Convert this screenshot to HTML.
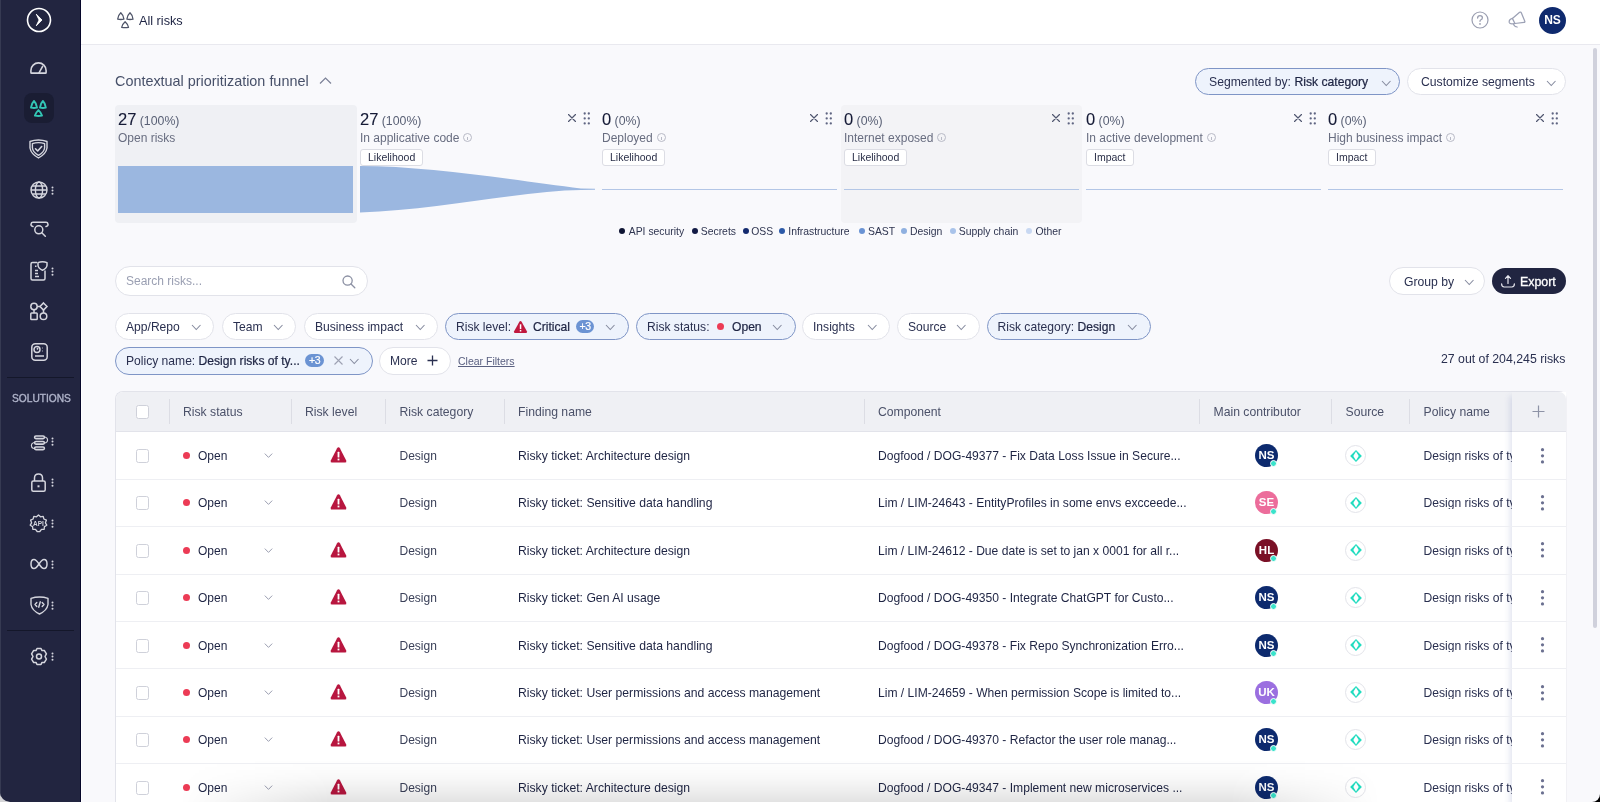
<!DOCTYPE html>
<html><head><meta charset="utf-8">
<style>
*{box-sizing:border-box;margin:0;padding:0}
html,body{width:1600px;height:802px;overflow:hidden;background:#000}
body{font-family:"Liberation Sans",sans-serif;color:#1e2443;position:relative}
.abs{position:absolute}
#app{will-change:transform;position:absolute;left:0;top:0;width:1600px;height:802px;background:#f9f9fc;border-radius:0 0 8px 10px;overflow:hidden}
#side{position:absolute;left:0;top:0;width:81px;height:802px;background:#222540;border-right:1px solid #06072a;border-bottom-left-radius:8px}
#side svg{position:absolute;overflow:visible}
.dots{position:absolute;width:2px;height:10px}
.dots i{display:block;width:2px;height:2px;border-radius:50%;background:#d5d6de;margin-bottom:1.1px}
#hdr{position:absolute;left:81px;top:0;width:1519px;height:45px;background:#fff;border-bottom:1px solid #e9e9ef}
.t{position:absolute;white-space:nowrap;line-height:1}
.pill{position:absolute;border-radius:14px;border:1px solid #e2e3ea;background:#fff;height:27px}
.pill.sel{background:#eef3fc;border-color:#7f95c6}
.chev{position:absolute}
.card{position:absolute;top:105px;width:242px;height:118px;border-radius:4px}
.num{position:absolute;font-size:16.5px;color:#151a36;line-height:1;-webkit-text-stroke:0.1px #151a36}
.num .pct{-webkit-text-stroke:0;margin-left:0px}
b.sb{font-weight:normal;color:#1e2443;-webkit-text-stroke:0.22px #1e2443}
.pct{font-size:12.3px;color:#596075}
.lbl{position:absolute;font-size:12px;color:#686d80;line-height:1;white-space:nowrap}
.tag{position:absolute;height:17px;border:1px solid #dcdde4;border-radius:3px;background:#fff;font-size:10.5px;color:#2a2f48;line-height:15px;padding:0 7px;white-space:nowrap}
.info{display:inline-block;width:9px;height:9px;border:1px solid #b8bac6;border-radius:50%;vertical-align:0px;margin-left:4px;position:relative}
.info:after{content:"";position:absolute;left:3px;top:3px;width:1px;height:3px;background:#b8bac6}
</style></head><body>
<div class="abs" style="left:0;top:780px;width:20px;height:22px;background:#d6d6d8"></div>
<div id="app">
<div class="abs" style="left:0;top:0;width:1px;height:802px;background:#363a52;z-index:5"></div>

<!-- SIDEBAR -->
<div id="side">
  <!-- toggle -->
  <svg style="left:26px;top:7px" width="26" height="26" viewBox="0 0 26 26"><circle cx="13" cy="13" r="11.5" fill="none" stroke="#fff" stroke-width="1.6"/><path d="M10.3 7.2 L16 13 L10.3 18.8 L13.1 13 Z" fill="#fff" stroke="#fff" stroke-width="0.9" stroke-linejoin="round"/></svg>
  <!-- dashboard -->
  <svg style="left:30px;top:62px" width="17" height="12" viewBox="0 0 17 12"><path d="M0.9 10.4 V8.5 A7.6 7.6 0 0 1 16.1 8.5 V10.4 Q16.1 11.1 15.4 11.1 H1.6 Q0.9 11.1 0.9 10.4 Z" fill="none" stroke="#d5d6de" stroke-width="1.6" stroke-linejoin="round"/><path d="M9 10.8 L12.6 4.3" stroke="#d5d6de" stroke-width="1.6" stroke-linecap="round"/></svg>
  <!-- active risks -->
  <div class="abs" style="left:24px;top:93px;width:30px;height:30px;border-radius:8px;background:#1a1d33"></div>
  <svg style="left:29px;top:99px" width="19" height="19" viewBox="0 0 19 19"><g fill="none" stroke="#33c6b5" stroke-width="1.9" stroke-linejoin="round"><path d="M5 2 Q7.4 4.2 8 8.6 Q5 9.3 2 8.6 Q2.6 4.2 5 2 Z"/><path d="M13.9 2 Q16.3 4.2 16.8 8.6 Q13.9 9.3 11 8.6 Q11.5 4.2 13.9 2 Z"/><path d="M9.45 11.1 Q11.9 13.3 13 16.6 Q9.45 17.4 5.9 16.6 Q7 13.3 9.45 11.1 Z"/></g></svg>
  <!-- shield check -->
  <svg style="left:29px;top:139px" width="19" height="20" viewBox="0 0 19 20"><g fill="none" stroke="#d5d6de" stroke-width="1.4" stroke-linejoin="round"><path d="M9.5 1 Q14 1 18 2.5 L18 9 Q17 15 9.5 19 Q2 15 1 9 L1 2.5 Q5 1 9.5 1 Z"/><path d="M9.5 3.6 Q12.8 3.6 15.6 4.6 L15.6 9 Q15 13.5 9.5 16.3 Q4 13.5 3.4 9 L3.4 4.6 Q6.2 3.6 9.5 3.6 Z"/><path d="M6.5 9.8 L8.7 12 L12.7 7.5" stroke-width="1.6" stroke-linecap="round"/></g></svg>
  <!-- globe -->
  <svg style="left:29.5px;top:181px" width="18" height="18" viewBox="0 0 18 18"><g fill="none" stroke="#d5d6de" stroke-width="1.4"><circle cx="9" cy="9" r="8"/><ellipse cx="9" cy="9" rx="3.6" ry="8"/><path d="M1 9 H17 M2.2 5 H15.8 M2.2 13 H15.8"/></g></svg>
  <svg style="left:51.0px;top:185.5px" width="3" height="11" viewBox="0 0 3 11"><g fill="#d5d6de"><circle cx="1.5" cy="1.5" r="1"/><circle cx="1.5" cy="4.6" r="1"/><circle cx="1.5" cy="7.7" r="1"/></g></svg>
  <!-- search binocular -->
  <svg style="left:29.5px;top:221px" width="19" height="18" viewBox="0 0 19 18"><g fill="none" stroke="#d5d6de" stroke-width="1.5" stroke-linecap="round"><path d="M3 5.5 Q0.6 5 1 3 Q1.3 1.3 3 1.3 H16 Q17.7 1.3 18 3 Q18.4 5 16 5.5"/><circle cx="8.8" cy="8.8" r="4"/><path d="M11.8 11.8 L15.3 15.3"/></g></svg>
  <!-- doc shield -->
  <svg style="left:30px;top:261px" width="18" height="20" viewBox="0 0 18 20"><g fill="none" stroke="#d5d6de" stroke-width="1.5" stroke-linejoin="round"><path d="M7 1.5 H2.5 Q1 1.5 1 3 V17.5 Q1 19 2.5 19 H13.5 Q15 19 15 17.5 V9.5"/><path d="M12.5 0.8 Q15 0.8 17 1.6 V4.5 Q16.6 7.5 12.5 9.2 Q8.4 7.5 8 4.5 V1.6 Q10 0.8 12.5 0.8 Z"/><path d="M5 5.2 H6.5 M5 9.5 H8 M5 12.5 H8 M5 15.5 H9" stroke-width="1.4"/></g></svg>
  <svg style="left:51.0px;top:266.5px" width="3" height="11" viewBox="0 0 3 11"><g fill="#d5d6de"><circle cx="1.5" cy="1.5" r="1"/><circle cx="1.5" cy="4.6" r="1"/><circle cx="1.5" cy="7.7" r="1"/></g></svg>
  <!-- workflow -->
  <svg style="left:30px;top:302px" width="18" height="19" viewBox="0 0 18 19"><g fill="none" stroke="#d5d6de" stroke-width="1.5"><circle cx="4" cy="4.5" r="3.2"/><path d="M13.5 0.9 L17 4.5 L13.5 8.1 L10 4.5 Z"/><rect x="0.8" y="11" width="6.4" height="6.6" rx="0.8"/><circle cx="13.5" cy="14.3" r="3.3"/><path d="M7.2 4.5 H10 M4 7.7 V11 M13.5 8.1 V11"/></g></svg>
  <!-- report -->
  <svg style="left:31px;top:343px" width="17" height="18" viewBox="0 0 17 18"><g fill="none" stroke="#d5d6de" stroke-width="1.5"><rect x="0.8" y="0.8" width="15.4" height="16.4" rx="3.5"/><circle cx="6" cy="6.5" r="3"/><path d="M6 6.5 L7 5 M11.5 5 H12 M11.5 8 H12 M4 13 H13"/></g></svg>
  <!-- divider -->
  <div class="abs" style="left:7px;top:377px;width:67px;height:1px;background:#14172a"></div>
  <div class="t" style="left:12px;top:393.5px;font-size:10.2px;color:#b0b4ca;-webkit-text-stroke:0.35px #b0b4ca;letter-spacing:0px">SOLUTIONS</div>
  <!-- db -->
  <svg style="left:29.5px;top:434px" width="19" height="18" viewBox="0 0 19 18"><g fill="none" stroke="#d5d6de" stroke-width="1.6"><rect x="4.6" y="2.0" width="9.8" height="2.6" rx="1.3"/><rect x="4.6" y="7.5" width="9.8" height="2.6" rx="1.3"/><rect x="4.6" y="13.0" width="9.8" height="2.6" rx="1.3"/></g><g fill="none" stroke="#d5d6de" stroke-width="1.2" stroke-linecap="round"><path d="M15.6 3.2 Q17.6 3.9 17.6 6.05 Q17.6 8.2 15.6 8.9"/><path d="M3.4 8.7 Q1.4 9.4 1.4 11.55 Q1.4 13.7 3.4 14.4"/></g></svg>
  <svg style="left:51.0px;top:436.5px" width="3" height="11" viewBox="0 0 3 11"><g fill="#d5d6de"><circle cx="1.5" cy="1.5" r="1"/><circle cx="1.5" cy="4.6" r="1"/><circle cx="1.5" cy="7.7" r="1"/></g></svg>
  <!-- lock -->
  <svg style="left:31px;top:473px" width="15" height="19" viewBox="0 0 15 19"><g fill="none" stroke="#d5d6de" stroke-width="1.5"><rect x="0.8" y="8" width="13.4" height="10.2" rx="1.5"/><path d="M3.5 8 V5 Q3.5 1 7.5 1 Q11.5 1 11.5 5 V8"/></g><rect x="6.5" y="12.3" width="2" height="2" fill="#d5d6de"/></svg>
  <svg style="left:51.0px;top:477.5px" width="3" height="11" viewBox="0 0 3 11"><g fill="#d5d6de"><circle cx="1.5" cy="1.5" r="1"/><circle cx="1.5" cy="4.6" r="1"/><circle cx="1.5" cy="7.7" r="1"/></g></svg>
  <!-- api -->
  <svg style="left:29px;top:514px" width="19" height="19" viewBox="0 0 19 19"><path d="M9.5 1 L11.5 2.8 L14.2 2.3 L14.9 5 L17.4 6.2 L16.4 8.8 L17.8 11.2 L15.4 12.6 L15.2 15.3 L12.5 15.3 L10.8 17.5 L9.5 17.7 L8.2 17.5 L6.5 15.3 L3.8 15.3 L3.6 12.6 L1.2 11.2 L2.6 8.8 L1.6 6.2 L4.1 5 L4.8 2.3 L7.5 2.8 Z" fill="none" stroke="#d5d6de" stroke-width="1.3" stroke-linejoin="round"/><text x="9.5" y="11.8" font-family="Liberation Sans" font-size="6.5" font-weight="bold" fill="#d5d6de" text-anchor="middle">API</text></svg>
  <svg style="left:51.0px;top:518.5px" width="3" height="11" viewBox="0 0 3 11"><g fill="#d5d6de"><circle cx="1.5" cy="1.5" r="1"/><circle cx="1.5" cy="4.6" r="1"/><circle cx="1.5" cy="7.7" r="1"/></g></svg>
  <!-- infinity -->
  <svg style="left:29.5px;top:558px" width="18" height="12" viewBox="0 0 18 12"><path d="M9 6 C7 3 5.5 1.5 4 1.5 C2 1.5 1 3.5 1 6 C1 8.5 2 10.5 4 10.5 C5.5 10.5 7 9 9 6 C11 3 12.5 1.5 14 1.5 C16 1.5 17 3.5 17 6 C17 8.5 16 10.5 14 10.5 C12.5 10.5 11 9 9 6 Z" fill="none" stroke="#d5d6de" stroke-width="1.5"/></svg>
  <svg style="left:51.0px;top:559.5px" width="3" height="11" viewBox="0 0 3 11"><g fill="#d5d6de"><circle cx="1.5" cy="1.5" r="1"/><circle cx="1.5" cy="4.6" r="1"/><circle cx="1.5" cy="7.7" r="1"/></g></svg>
  <!-- shield code -->
  <svg style="left:29.5px;top:596px" width="19" height="19" viewBox="0 0 19 19"><g fill="none" stroke="#d5d6de" stroke-width="1.4" stroke-linejoin="round" stroke-linecap="round"><path d="M9.5 1 Q14 1 18 2.4 L18 8.5 Q17 14.5 9.5 18 Q2 14.5 1 8.5 L1 2.4 Q5 1 9.5 1 Z"/><path d="M6.8 6.5 L5 8.5 L6.8 10.5 M12.2 6.5 L14 8.5 L12.2 10.5 M10.3 5.8 L8.7 11.2"/></g></svg>
  <svg style="left:51.0px;top:600.5px" width="3" height="11" viewBox="0 0 3 11"><g fill="#d5d6de"><circle cx="1.5" cy="1.5" r="1"/><circle cx="1.5" cy="4.6" r="1"/><circle cx="1.5" cy="7.7" r="1"/></g></svg>
  <div class="abs" style="left:7px;top:630px;width:67px;height:1px;background:#14172a"></div>
  <!-- gear -->
  <svg style="left:30px;top:647px" width="18" height="19" viewBox="0 0 18 19"><g fill="none" stroke="#d5d6de" stroke-width="1.5" stroke-linejoin="round"><path d="M7 1.5 H11 L12 3.6 L14.3 3.4 L16.4 6.9 L15 9.5 L16.4 12.1 L14.3 15.6 L12 15.4 L11 17.5 H7 L6 15.4 L3.7 15.6 L1.6 12.1 L3 9.5 L1.6 6.9 L3.7 3.4 L6 3.6 Z"/><circle cx="9" cy="9.5" r="2.5"/></g></svg>
  <svg style="left:51.0px;top:651.5px" width="3" height="11" viewBox="0 0 3 11"><g fill="#d5d6de"><circle cx="1.5" cy="1.5" r="1"/><circle cx="1.5" cy="4.6" r="1"/><circle cx="1.5" cy="7.7" r="1"/></g></svg>
</div>

<div class="abs" style="left:81px;top:0;width:1px;height:802px;background:#fff"></div>
<!-- HEADER -->
<div id="hdr"></div>
<svg class="abs" style="left:116px;top:11px" width="19" height="18" viewBox="0 0 19 18"><g fill="none" stroke="#4e5468" stroke-width="1.3" stroke-linejoin="round"><path d="M4.8 1.7 Q7.4 3.9 7.9 8.2 Q4.8 8.8 1.7 8.2 Q2.2 3.9 4.8 1.7 Z"/><path d="M14 1.7 Q16.6 3.9 17 8.2 Q14 8.8 10.9 8.2 Q11.4 3.9 14 1.7 Z"/><path d="M9.1 10.7 Q11.7 12.9 12.5 16.3 Q9.1 16.9 5.7 16.3 Q6.5 12.9 9.1 10.7 Z"/></g></svg>
<div class="t" style="left:139px;top:14.5px;font-size:12.7px;color:#1e2443">All risks</div>
<svg class="abs" style="left:1471px;top:11px" width="18" height="18" viewBox="0 0 18 18"><circle cx="9" cy="9" r="8" fill="none" stroke="#9a9eb0" stroke-width="1.2"/><path d="M6.6 7 Q6.6 4.6 9 4.6 Q11.4 4.6 11.4 6.8 Q11.4 8.3 9.6 9 Q9 9.3 9 10.3" fill="none" stroke="#9a9eb0" stroke-width="1.3" stroke-linecap="round"/><circle cx="9" cy="12.9" r="0.9" fill="#9a9eb0"/></svg>
<svg class="abs" style="left:1502px;top:6px" width="30" height="28" viewBox="0 0 30 28"><g fill="none" stroke="#9ca1b5" stroke-width="1.25" stroke-linejoin="round" stroke-linecap="round"><path d="M10.4 12.4 L17.6 6.3 Q18.7 5.6 19.3 6.7 L22.8 15.2 Q23.1 16.3 22 16.4 L12.9 17.5 Z"/><path d="M10.4 12.4 Q6.8 13.4 7.2 16.4 Q7.8 18.6 12.9 17.5"/><path d="M11.4 17.9 Q12.3 20.9 15.2 21"/></g></svg>
<div class="abs" style="left:1539px;top:7px;width:27px;height:27px;border-radius:50%;background:#0f2a6e;color:#fff;font-size:12px;font-weight:bold;text-align:center;line-height:27px">NS</div>


<!-- FUNNEL -->
<div class="t" style="left:115px;top:74px;font-size:14.4px;color:#475069">Contextual prioritization funnel</div>
<svg class="abs" style="left:319px;top:76px" width="13" height="9" viewBox="0 0 13 9"><path d="M1 7.5 L6.5 2 L12 7.5" fill="none" stroke="#7b8096" stroke-width="1.2"/></svg>
<div class="card" style="left:115px;background:#eff0f4"></div>
<div class="card" style="left:841px;width:241px;background:#f3f3f6"></div>
<div class="num" style="left:118px;top:111px">27<span class="pct"> (100%)</span></div>
<div class="lbl" style="left:118px;top:132px">Open risks</div>
<div class="num" style="left:360px;top:111px">27<span class="pct"> (100%)</span></div>
<div class="lbl" style="left:360px;top:132px">In applicative code<span class="info"></span></div>
<div class="tag" style="left:360px;top:149px">Likelihood</div>
<svg class="abs" style="left:567.5px;top:114.3px" width="8" height="8" viewBox="0 0 8 8"><path d="M0.5 0.5 L7.5 7.5 M7.5 0.5 L0.5 7.5" stroke="#50566f" stroke-width="1.15" stroke-linecap="round"/></svg>
<svg class="abs" style="left:583px;top:112px" width="8" height="13" viewBox="0 0 8 13"><g fill="#5f6582"><circle cx="1.7" cy="1.5" r="1.15"/><circle cx="5.8" cy="1.5" r="1.15"/><circle cx="1.7" cy="6.4" r="1.15"/><circle cx="5.8" cy="6.4" r="1.15"/><circle cx="1.7" cy="11.4" r="1.15"/><circle cx="5.8" cy="11.4" r="1.15"/></g></svg>
<div class="num" style="left:602px;top:111px">0<span class="pct"> (0%)</span></div>
<div class="lbl" style="left:602px;top:132px">Deployed<span class="info"></span></div>
<div class="tag" style="left:602px;top:149px">Likelihood</div>
<svg class="abs" style="left:809.5px;top:114.3px" width="8" height="8" viewBox="0 0 8 8"><path d="M0.5 0.5 L7.5 7.5 M7.5 0.5 L0.5 7.5" stroke="#50566f" stroke-width="1.15" stroke-linecap="round"/></svg>
<svg class="abs" style="left:825px;top:112px" width="8" height="13" viewBox="0 0 8 13"><g fill="#5f6582"><circle cx="1.7" cy="1.5" r="1.15"/><circle cx="5.8" cy="1.5" r="1.15"/><circle cx="1.7" cy="6.4" r="1.15"/><circle cx="5.8" cy="6.4" r="1.15"/><circle cx="1.7" cy="11.4" r="1.15"/><circle cx="5.8" cy="11.4" r="1.15"/></g></svg>
<div class="abs" style="left:602px;top:189px;width:235px;height:1px;background:#b3c6e6"></div>
<div class="num" style="left:844px;top:111px">0<span class="pct"> (0%)</span></div>
<div class="lbl" style="left:844px;top:132px">Internet exposed<span class="info"></span></div>
<div class="tag" style="left:844px;top:149px">Likelihood</div>
<svg class="abs" style="left:1051.5px;top:114.3px" width="8" height="8" viewBox="0 0 8 8"><path d="M0.5 0.5 L7.5 7.5 M7.5 0.5 L0.5 7.5" stroke="#50566f" stroke-width="1.15" stroke-linecap="round"/></svg>
<svg class="abs" style="left:1067px;top:112px" width="8" height="13" viewBox="0 0 8 13"><g fill="#5f6582"><circle cx="1.7" cy="1.5" r="1.15"/><circle cx="5.8" cy="1.5" r="1.15"/><circle cx="1.7" cy="6.4" r="1.15"/><circle cx="5.8" cy="6.4" r="1.15"/><circle cx="1.7" cy="11.4" r="1.15"/><circle cx="5.8" cy="11.4" r="1.15"/></g></svg>
<div class="abs" style="left:844px;top:189px;width:235px;height:1px;background:#b3c6e6"></div>
<div class="num" style="left:1086px;top:111px">0<span class="pct"> (0%)</span></div>
<div class="lbl" style="left:1086px;top:132px">In active development<span class="info"></span></div>
<div class="tag" style="left:1086px;top:149px">Impact</div>
<svg class="abs" style="left:1293.5px;top:114.3px" width="8" height="8" viewBox="0 0 8 8"><path d="M0.5 0.5 L7.5 7.5 M7.5 0.5 L0.5 7.5" stroke="#50566f" stroke-width="1.15" stroke-linecap="round"/></svg>
<svg class="abs" style="left:1309px;top:112px" width="8" height="13" viewBox="0 0 8 13"><g fill="#5f6582"><circle cx="1.7" cy="1.5" r="1.15"/><circle cx="5.8" cy="1.5" r="1.15"/><circle cx="1.7" cy="6.4" r="1.15"/><circle cx="5.8" cy="6.4" r="1.15"/><circle cx="1.7" cy="11.4" r="1.15"/><circle cx="5.8" cy="11.4" r="1.15"/></g></svg>
<div class="abs" style="left:1086px;top:189px;width:235px;height:1px;background:#b3c6e6"></div>
<div class="num" style="left:1328px;top:111px">0<span class="pct"> (0%)</span></div>
<div class="lbl" style="left:1328px;top:132px">High business impact<span class="info"></span></div>
<div class="tag" style="left:1328px;top:149px">Impact</div>
<svg class="abs" style="left:1535.5px;top:114.3px" width="8" height="8" viewBox="0 0 8 8"><path d="M0.5 0.5 L7.5 7.5 M7.5 0.5 L0.5 7.5" stroke="#50566f" stroke-width="1.15" stroke-linecap="round"/></svg>
<svg class="abs" style="left:1551px;top:112px" width="8" height="13" viewBox="0 0 8 13"><g fill="#5f6582"><circle cx="1.7" cy="1.5" r="1.15"/><circle cx="5.8" cy="1.5" r="1.15"/><circle cx="1.7" cy="6.4" r="1.15"/><circle cx="5.8" cy="6.4" r="1.15"/><circle cx="1.7" cy="11.4" r="1.15"/><circle cx="5.8" cy="11.4" r="1.15"/></g></svg>
<div class="abs" style="left:1328px;top:189px;width:235px;height:1px;background:#b3c6e6"></div>
<div class="abs" style="left:118px;top:166px;width:235px;height:47px;background:#9bb7e0"></div>
<svg class="abs" style="left:360px;top:160px" width="240" height="60" viewBox="360 160 240 60"><path d="M360 166 C430 166 520 181 581 188.5 L595 188.7 L595 189.7 L581 190 C525 190.5 440 210 360 212.5 Z" fill="#9bb7e0"/></svg>
<div class="abs" style="left:619.25px;top:228.3px;width:6px;height:6px;border-radius:50%;background:#0f1534"></div>
<div class="t" style="left:628.75px;top:226.5px;font-size:10.4px;color:#2f3550">API security</div>
<div class="abs" style="left:692px;top:228.3px;width:6px;height:6px;border-radius:50%;background:#121a45"></div>
<div class="t" style="left:700.75px;top:226.5px;font-size:10.4px;color:#2f3550">Secrets</div>
<div class="abs" style="left:742.5px;top:228.3px;width:6px;height:6px;border-radius:50%;background:#142a6e"></div>
<div class="t" style="left:751.25px;top:226.5px;font-size:10.4px;color:#2f3550">OSS</div>
<div class="abs" style="left:779.25px;top:228.3px;width:6px;height:6px;border-radius:50%;background:#2d5aa8"></div>
<div class="t" style="left:788.25px;top:226.5px;font-size:10.4px;color:#2f3550">Infrastructure</div>
<div class="abs" style="left:858.75px;top:228.3px;width:6px;height:6px;border-radius:50%;background:#6a93d4"></div>
<div class="t" style="left:868px;top:226.5px;font-size:10.4px;color:#2f3550">SAST</div>
<div class="abs" style="left:900.75px;top:228.3px;width:6px;height:6px;border-radius:50%;background:#8fb0e0"></div>
<div class="t" style="left:910px;top:226.5px;font-size:10.4px;color:#2f3550">Design</div>
<div class="abs" style="left:950px;top:228.3px;width:6px;height:6px;border-radius:50%;background:#a9c3ea"></div>
<div class="t" style="left:958.75px;top:226.5px;font-size:10.4px;color:#2f3550">Supply chain</div>
<div class="abs" style="left:1026.25px;top:228.3px;width:6px;height:6px;border-radius:50%;background:#c8d8f2"></div>
<div class="t" style="left:1035.5px;top:226.5px;font-size:10.4px;color:#2f3550">Other</div>
<div class="abs" style="left:1593px;top:48px;width:4px;height:580px;border-radius:2px;background:#d0d1dc"></div>
<!-- SEGMENT BUTTONS -->
<div class="pill sel" style="left:1195px;top:68px;width:205px;height:27px;border-radius:14px"></div>
<div class="t" style="left:1209px;top:76px;font-size:12.2px;color:#2a3050">Segmented by: <b class="sb">Risk category</b></div>
<svg class="abs" style="left:1380.5px;top:80px" width="10.5" height="6.5" viewBox="-1 -1 10.5 6.5"><path d="M0 0 L4.25 4.5 L8.5 0" fill="none" stroke="#858a9e" stroke-width="1.05"/></svg>
<div class="pill" style="left:1407px;top:68px;width:159px;height:27px"></div>
<div class="t" style="left:1421px;top:76px;font-size:12.2px;color:#2a3050">Customize segments</div>
<svg class="abs" style="left:1546px;top:80px" width="10.5" height="6.5" viewBox="-1 -1 10.5 6.5"><path d="M0 0 L4.25 4.5 L8.5 0" fill="none" stroke="#858a9e" stroke-width="1.05"/></svg>
<!-- SEARCH -->
<div class="pill" style="left:115px;top:266px;width:253px;height:30px;border-radius:15px"></div>
<div class="t" style="left:126px;top:275px;font-size:12px;color:#9a9fb2">Search risks...</div>
<svg class="abs" style="left:342px;top:275px" width="14" height="14" viewBox="0 0 14 14"><circle cx="5.6" cy="5.6" r="4.6" fill="none" stroke="#8b90a3" stroke-width="1.3"/><path d="M9 9 L12.8 12.8" stroke="#8b90a3" stroke-width="1.3" stroke-linecap="round"/></svg>
<div class="pill" style="left:1389px;top:267px;width:96px;height:28px"></div>
<div class="t" style="left:1404px;top:276px;font-size:12.2px;color:#2a3050">Group by</div>
<svg class="abs" style="left:1464px;top:279px" width="10.5" height="6.5" viewBox="-1 -1 10.5 6.5"><path d="M0 0 L4.25 4.5 L8.5 0" fill="none" stroke="#858a9e" stroke-width="1.05"/></svg>
<div class="abs" style="left:1491.5px;top:267.5px;width:74.5px;height:26.5px;border-radius:13.5px;background:#212541"></div>
<svg class="abs" style="left:1500px;top:273px" width="16" height="15" viewBox="0 0 16 15"><g fill="none" stroke="#e6e7ee" stroke-width="1.2" stroke-linecap="round" stroke-linejoin="round"><path d="M8 10.5 V2.8 M5.5 5.3 L8 2.6 L10.5 5.3"/><path d="M1.6 10.8 Q1.6 14 4.2 14 H11.8 Q14.4 14 14.4 10.8"/></g></svg>
<div class="t" style="left:1520px;top:276px;font-size:12.4px;color:#fff;-webkit-text-stroke:0.3px #fff">Export</div>
<!-- FILTER PILLS -->
<div class="pill" style="left:115px;top:313px;width:99px;height:27px"></div>
<div class="t" style="left:126px;top:321px;font-size:12.1px;color:#2a3050">App/Repo</div>
<svg class="abs" style="left:191px;top:324px" width="10.5" height="6.5" viewBox="-1 -1 10.5 6.5"><path d="M0 0 L4.25 4.5 L8.5 0" fill="none" stroke="#858a9e" stroke-width="1.05"/></svg>
<div class="pill" style="left:222px;top:313px;width:74px;height:27px"></div>
<div class="t" style="left:233px;top:321px;font-size:12.1px;color:#2a3050">Team</div>
<svg class="abs" style="left:273px;top:324px" width="10.5" height="6.5" viewBox="-1 -1 10.5 6.5"><path d="M0 0 L4.25 4.5 L8.5 0" fill="none" stroke="#858a9e" stroke-width="1.05"/></svg>
<div class="pill" style="left:304px;top:313px;width:134px;height:27px"></div>
<div class="t" style="left:315px;top:321px;font-size:12.1px;color:#2a3050">Business impact</div>
<svg class="abs" style="left:415px;top:324px" width="10.5" height="6.5" viewBox="-1 -1 10.5 6.5"><path d="M0 0 L4.25 4.5 L8.5 0" fill="none" stroke="#858a9e" stroke-width="1.05"/></svg>
<div class="pill sel" style="left:445px;top:313px;width:184px;height:27px"></div>
<svg class="abs" style="left:605px;top:324px" width="10.5" height="6.5" viewBox="-1 -1 10.5 6.5"><path d="M0 0 L4.25 4.5 L8.5 0" fill="none" stroke="#858a9e" stroke-width="1.05"/></svg>
<div class="pill sel" style="left:636px;top:313px;width:160px;height:27px"></div>
<svg class="abs" style="left:772px;top:324px" width="10.5" height="6.5" viewBox="-1 -1 10.5 6.5"><path d="M0 0 L4.25 4.5 L8.5 0" fill="none" stroke="#858a9e" stroke-width="1.05"/></svg>
<div class="pill" style="left:802px;top:313px;width:88px;height:27px"></div>
<div class="t" style="left:813px;top:321px;font-size:12.1px;color:#2a3050">Insights</div>
<svg class="abs" style="left:867px;top:324px" width="10.5" height="6.5" viewBox="-1 -1 10.5 6.5"><path d="M0 0 L4.25 4.5 L8.5 0" fill="none" stroke="#858a9e" stroke-width="1.05"/></svg>
<div class="pill" style="left:897px;top:313px;width:83px;height:27px"></div>
<div class="t" style="left:908px;top:321px;font-size:12.1px;color:#2a3050">Source</div>
<svg class="abs" style="left:956px;top:324px" width="10.5" height="6.5" viewBox="-1 -1 10.5 6.5"><path d="M0 0 L4.25 4.5 L8.5 0" fill="none" stroke="#858a9e" stroke-width="1.05"/></svg>
<div class="pill sel" style="left:987px;top:313px;width:164px;height:27px"></div>
<svg class="abs" style="left:1127px;top:324px" width="10.5" height="6.5" viewBox="-1 -1 10.5 6.5"><path d="M0 0 L4.25 4.5 L8.5 0" fill="none" stroke="#858a9e" stroke-width="1.05"/></svg>
<div class="t" style="left:456px;top:321px;font-size:12.1px;color:#2a3050">Risk level:</div>
<svg class="abs" style="left:513px;top:320px" width="15" height="14" viewBox="0 0 15 14"><path d="M7.5 1 Q8.2 1 8.6 1.7 L14 11.6 Q14.5 13 13 13 H2 Q0.5 13 1 11.6 L6.4 1.7 Q6.8 1 7.5 1 Z" fill="#c0183f"/><rect x="6.8" y="4.3" width="1.5" height="4.8" fill="#fff"/><rect x="6.8" y="10" width="1.5" height="1.5" fill="#fff"/></svg>
<div class="t" style="left:533px;top:321px;font-size:12.1px;color:#1e2443;-webkit-text-stroke:0.22px #1e2443">Critical</div>
<div class="abs" style="left:576px;top:320px;width:18px;height:13px;border-radius:7px;background:#6b93d3;color:#fff;font-size:10.5px;line-height:13px;text-align:center;letter-spacing:-0.5px;-webkit-text-stroke:0.2px #fff">+3</div>
<div class="t" style="left:647px;top:321px;font-size:12.1px;color:#2a3050">Risk status:</div>
<div class="abs" style="left:717px;top:323px;width:7px;height:7px;border-radius:50%;background:#ec3b55"></div>
<div class="t" style="left:732px;top:321px;font-size:12.1px;color:#1e2443;-webkit-text-stroke:0.22px #1e2443">Open</div>
<div class="t" style="left:997.5px;top:321px;font-size:12.1px;color:#2a3050">Risk category: <b class="sb">Design</b></div>
<div class="pill sel" style="left:115px;top:347px;width:258px;height:28px"></div>
<div class="t" style="left:126px;top:355px;font-size:12.1px;color:#2a3050">Policy name: <b class="sb">Design risks of ty...</b></div>
<div class="abs" style="left:305px;top:354px;width:19px;height:13px;border-radius:7px;background:#6b93d3;color:#fff;font-size:10.5px;line-height:13px;text-align:center;letter-spacing:-0.5px;-webkit-text-stroke:0.2px #fff">+3</div>
<svg class="abs" style="left:334px;top:356px" width="9" height="9" viewBox="0 0 9 9"><path d="M0.5 0.5 L8.5 8.5 M8.5 0.5 L0.5 8.5" stroke="#9ea2b3" stroke-width="1.1"/></svg>
<svg class="abs" style="left:349px;top:358px" width="10.5" height="6.5" viewBox="-1 -1 10.5 6.5"><path d="M0 0 L4.25 4.5 L8.5 0" fill="none" stroke="#858a9e" stroke-width="1.05"/></svg>
<div class="pill" style="left:379px;top:347px;width:72px;height:28px"></div>
<div class="t" style="left:390px;top:355px;font-size:12.1px;color:#2a3050">More</div>
<svg class="abs" style="left:427px;top:355px" width="11" height="11" viewBox="0 0 11 11"><path d="M5.5 0.5 V10.5 M0.5 5.5 H10.5" stroke="#2a3050" stroke-width="1.3"/></svg>
<div class="t" style="left:458px;top:356px;font-size:10.5px;color:#5a6080;text-decoration:underline">Clear Filters</div>
<div class="t" style="left:1441px;top:353px;font-size:12.3px;color:#2a3050">27 out of 204,245 risks</div>
<!-- TABLE -->
<div class="abs" style="left:115px;top:391px;width:1452px;height:420px;background:#fff;border:1px solid #e2e3ea;border-right-color:#f1f1f5;border-radius:8px 8px 0 0;overflow:hidden">
<div class="abs" style="left:0;top:0;width:1452px;height:40px;background:#eff0f4;border-bottom:1px solid #e2e3ea"></div>
</div>
<div class="abs" style="left:169px;top:399px;width:1px;height:25px;background:#dcdde4"></div>
<div class="abs" style="left:291px;top:399px;width:1px;height:25px;background:#dcdde4"></div>
<div class="abs" style="left:385px;top:399px;width:1px;height:25px;background:#dcdde4"></div>
<div class="abs" style="left:504px;top:399px;width:1px;height:25px;background:#dcdde4"></div>
<div class="abs" style="left:864px;top:399px;width:1px;height:25px;background:#dcdde4"></div>
<div class="abs" style="left:1199px;top:399px;width:1px;height:25px;background:#dcdde4"></div>
<div class="abs" style="left:1331px;top:399px;width:1px;height:25px;background:#dcdde4"></div>
<div class="abs" style="left:1409px;top:399px;width:1px;height:25px;background:#dcdde4"></div>
<div class="t" style="left:183px;top:406px;font-size:12.2px;color:#4b5169">Risk status</div>
<div class="t" style="left:305px;top:406px;font-size:12.2px;color:#4b5169">Risk level</div>
<div class="t" style="left:399.5px;top:406px;font-size:12.2px;color:#4b5169">Risk category</div>
<div class="t" style="left:518px;top:406px;font-size:12.2px;color:#4b5169">Finding name</div>
<div class="t" style="left:878px;top:406px;font-size:12.2px;color:#4b5169">Component</div>
<div class="t" style="left:1213.5px;top:406px;font-size:12.2px;color:#4b5169">Main contributor</div>
<div class="t" style="left:1345.5px;top:406px;font-size:12.2px;color:#4b5169">Source</div>
<div class="t" style="left:1423.5px;top:406px;font-size:12.2px;color:#4b5169">Policy name</div>
<div class="abs" style="left:136px;top:405px;width:13px;height:13.5px;border:1px solid #cfd1da;border-radius:2.5px;background:#fff"></div>
<div class="abs" style="left:1512px;top:392px;width:54px;height:420px;background:#fff;box-shadow:-6px 0 6px -4px rgba(70,90,160,0.16)"></div>
<div class="abs" style="left:1512px;top:392px;width:54px;height:40px;background:#eff0f4;border-bottom:1px solid #e2e3ea;border-top-right-radius:7px"></div>
<svg class="abs" style="left:1532px;top:405px" width="13" height="13" viewBox="0 0 13 13"><path d="M6.5 0.5 V12.5 M0.5 6.5 H12.5" stroke="#8e93a6" stroke-width="1.2"/></svg>
<div class="abs" style="left:136px;top:449px;width:13px;height:13.5px;border:1px solid #cfd1da;border-radius:2.5px;background:#fff"></div>
<div class="abs" style="left:183px;top:452px;width:7px;height:7px;border-radius:50%;background:#ec3b55"></div>
<div class="t" style="left:198px;top:450px;font-size:12px;color:#1e2443">Open</div>
<svg class="abs" style="left:263.5px;top:453.0px" width="9" height="6" viewBox="0 0 9 6"><path d="M0.8 0.6 L4.5 4.4 L8.2 0.6" fill="none" stroke="#9a9eb0" stroke-width="1"/></svg>
<svg class="abs" style="left:330px;top:447.0px" width="17" height="17" viewBox="0 0 17 17"><path d="M8.5 0.3 Q9.4 0.3 9.9 1.2 L16.2 13.4 Q16.9 15.6 15 15.6 H2 Q0.1 15.6 0.8 13.4 L7.1 1.2 Q7.6 0.3 8.5 0.3 Z" fill="#b8163f"/><rect x="7.6" y="4.8" width="1.8" height="5.6" rx="0.5" fill="#fff"/><rect x="7.6" y="11.6" width="1.8" height="1.8" fill="#fff"/></svg>
<div class="t" style="left:399.5px;top:450px;font-size:12px;color:#3b4159">Design</div>
<div class="t" style="left:518px;top:450px;font-size:12.2px;color:#1e2443">Risky ticket: Architecture design</div>
<div class="t" style="left:878px;top:450px;font-size:12.1px;color:#1e2443">Dogfood / DOG-49377 - Fix Data Loss Issue in Secure...</div>
<div class="abs" style="left:1255px;top:444px;width:23px;height:23px;border-radius:50%;background:#0d2a6e;color:#fff;font-size:11.5px;font-weight:bold;text-align:center;line-height:23px;letter-spacing:0px">NS</div>
<div class="abs" style="left:1270px;top:460px;width:7px;height:7px;border-radius:50%;background:#3ae3cb;border:1px solid #fff"></div>
<div class="abs" style="left:1345px;top:445px;width:21px;height:21px;border-radius:50%;background:#fff;border:1px solid #e3e4ea"></div>
<svg class="abs" style="left:1350px;top:450px" width="12" height="12" viewBox="0 0 12 12"><path d="M6 0 L11.9 6 L6 12 L0.1 6 Z M6 1.6 L3.3 6 L6 10.4 L8.7 6 Z" fill="#22dcc0" fill-rule="evenodd"/></svg>
<div class="abs" style="left:1423.5px;top:450px;width:88.5px;overflow:hidden;white-space:nowrap;font-size:12.1px;line-height:1;color:#2a3050">Design risks of type</div>
<svg class="abs" style="left:1540px;top:447.5px" width="5" height="17" viewBox="0 0 5 17"><g fill="#6b7090"><circle cx="2.5" cy="1.7" r="1.6"/><circle cx="2.5" cy="7.8" r="1.6"/><circle cx="2.5" cy="13.9" r="1.6"/></g></svg>
<div class="abs" style="left:116px;top:479px;width:1450px;height:1px;background:#eeeff3"></div>
<div class="abs" style="left:136px;top:496px;width:13px;height:13.5px;border:1px solid #cfd1da;border-radius:2.5px;background:#fff"></div>
<div class="abs" style="left:183px;top:499px;width:7px;height:7px;border-radius:50%;background:#ec3b55"></div>
<div class="t" style="left:198px;top:497px;font-size:12px;color:#1e2443">Open</div>
<svg class="abs" style="left:263.5px;top:500.4px" width="9" height="6" viewBox="0 0 9 6"><path d="M0.8 0.6 L4.5 4.4 L8.2 0.6" fill="none" stroke="#9a9eb0" stroke-width="1"/></svg>
<svg class="abs" style="left:330px;top:494.4px" width="17" height="17" viewBox="0 0 17 17"><path d="M8.5 0.3 Q9.4 0.3 9.9 1.2 L16.2 13.4 Q16.9 15.6 15 15.6 H2 Q0.1 15.6 0.8 13.4 L7.1 1.2 Q7.6 0.3 8.5 0.3 Z" fill="#b8163f"/><rect x="7.6" y="4.8" width="1.8" height="5.6" rx="0.5" fill="#fff"/><rect x="7.6" y="11.6" width="1.8" height="1.8" fill="#fff"/></svg>
<div class="t" style="left:399.5px;top:497px;font-size:12px;color:#3b4159">Design</div>
<div class="t" style="left:518px;top:497px;font-size:12.2px;color:#1e2443">Risky ticket: Sensitive data handling</div>
<div class="t" style="left:878px;top:497px;font-size:12.1px;color:#1e2443">Lim / LIM-24643 - EntityProfiles in some envs excceede...</div>
<div class="abs" style="left:1255px;top:491px;width:23px;height:23px;border-radius:50%;background:#ec6d9b;color:#fff;font-size:11.5px;font-weight:bold;text-align:center;line-height:23px;letter-spacing:0px">SE</div>
<div class="abs" style="left:1270px;top:508px;width:7px;height:7px;border-radius:50%;background:#3ae3cb;border:1px solid #fff"></div>
<div class="abs" style="left:1345px;top:492px;width:21px;height:21px;border-radius:50%;background:#fff;border:1px solid #e3e4ea"></div>
<svg class="abs" style="left:1350px;top:497px" width="12" height="12" viewBox="0 0 12 12"><path d="M6 0 L11.9 6 L6 12 L0.1 6 Z M6 1.6 L3.3 6 L6 10.4 L8.7 6 Z" fill="#22dcc0" fill-rule="evenodd"/></svg>
<div class="abs" style="left:1423.5px;top:497px;width:88.5px;overflow:hidden;white-space:nowrap;font-size:12.1px;line-height:1;color:#2a3050">Design risks of type</div>
<svg class="abs" style="left:1540px;top:494.9px" width="5" height="17" viewBox="0 0 5 17"><g fill="#6b7090"><circle cx="2.5" cy="1.7" r="1.6"/><circle cx="2.5" cy="7.8" r="1.6"/><circle cx="2.5" cy="13.9" r="1.6"/></g></svg>
<div class="abs" style="left:116px;top:526px;width:1450px;height:1px;background:#eeeff3"></div>
<div class="abs" style="left:136px;top:544px;width:13px;height:13.5px;border:1px solid #cfd1da;border-radius:2.5px;background:#fff"></div>
<div class="abs" style="left:183px;top:547px;width:7px;height:7px;border-radius:50%;background:#ec3b55"></div>
<div class="t" style="left:198px;top:545px;font-size:12px;color:#1e2443">Open</div>
<svg class="abs" style="left:263.5px;top:547.8px" width="9" height="6" viewBox="0 0 9 6"><path d="M0.8 0.6 L4.5 4.4 L8.2 0.6" fill="none" stroke="#9a9eb0" stroke-width="1"/></svg>
<svg class="abs" style="left:330px;top:541.8px" width="17" height="17" viewBox="0 0 17 17"><path d="M8.5 0.3 Q9.4 0.3 9.9 1.2 L16.2 13.4 Q16.9 15.6 15 15.6 H2 Q0.1 15.6 0.8 13.4 L7.1 1.2 Q7.6 0.3 8.5 0.3 Z" fill="#b8163f"/><rect x="7.6" y="4.8" width="1.8" height="5.6" rx="0.5" fill="#fff"/><rect x="7.6" y="11.6" width="1.8" height="1.8" fill="#fff"/></svg>
<div class="t" style="left:399.5px;top:545px;font-size:12px;color:#3b4159">Design</div>
<div class="t" style="left:518px;top:545px;font-size:12.2px;color:#1e2443">Risky ticket: Architecture design</div>
<div class="t" style="left:878px;top:545px;font-size:12.1px;color:#1e2443">Lim / LIM-24612 - Due date is set to jan x 0001 for all r...</div>
<div class="abs" style="left:1255px;top:539px;width:23px;height:23px;border-radius:50%;background:#7a1026;color:#fff;font-size:11.5px;font-weight:bold;text-align:center;line-height:23px;letter-spacing:0px">HL</div>
<div class="abs" style="left:1270px;top:555px;width:7px;height:7px;border-radius:50%;background:#3ae3cb;border:1px solid #fff"></div>
<div class="abs" style="left:1345px;top:540px;width:21px;height:21px;border-radius:50%;background:#fff;border:1px solid #e3e4ea"></div>
<svg class="abs" style="left:1350px;top:544px" width="12" height="12" viewBox="0 0 12 12"><path d="M6 0 L11.9 6 L6 12 L0.1 6 Z M6 1.6 L3.3 6 L6 10.4 L8.7 6 Z" fill="#22dcc0" fill-rule="evenodd"/></svg>
<div class="abs" style="left:1423.5px;top:545px;width:88.5px;overflow:hidden;white-space:nowrap;font-size:12.1px;line-height:1;color:#2a3050">Design risks of type</div>
<svg class="abs" style="left:1540px;top:542.3px" width="5" height="17" viewBox="0 0 5 17"><g fill="#6b7090"><circle cx="2.5" cy="1.7" r="1.6"/><circle cx="2.5" cy="7.8" r="1.6"/><circle cx="2.5" cy="13.9" r="1.6"/></g></svg>
<div class="abs" style="left:116px;top:574px;width:1450px;height:1px;background:#eeeff3"></div>
<div class="abs" style="left:136px;top:591px;width:13px;height:13.5px;border:1px solid #cfd1da;border-radius:2.5px;background:#fff"></div>
<div class="abs" style="left:183px;top:594px;width:7px;height:7px;border-radius:50%;background:#ec3b55"></div>
<div class="t" style="left:198px;top:592px;font-size:12px;color:#1e2443">Open</div>
<svg class="abs" style="left:263.5px;top:595.2px" width="9" height="6" viewBox="0 0 9 6"><path d="M0.8 0.6 L4.5 4.4 L8.2 0.6" fill="none" stroke="#9a9eb0" stroke-width="1"/></svg>
<svg class="abs" style="left:330px;top:589.2px" width="17" height="17" viewBox="0 0 17 17"><path d="M8.5 0.3 Q9.4 0.3 9.9 1.2 L16.2 13.4 Q16.9 15.6 15 15.6 H2 Q0.1 15.6 0.8 13.4 L7.1 1.2 Q7.6 0.3 8.5 0.3 Z" fill="#b8163f"/><rect x="7.6" y="4.8" width="1.8" height="5.6" rx="0.5" fill="#fff"/><rect x="7.6" y="11.6" width="1.8" height="1.8" fill="#fff"/></svg>
<div class="t" style="left:399.5px;top:592px;font-size:12px;color:#3b4159">Design</div>
<div class="t" style="left:518px;top:592px;font-size:12.2px;color:#1e2443">Risky ticket: Gen AI usage</div>
<div class="t" style="left:878px;top:592px;font-size:12.1px;color:#1e2443">Dogfood / DOG-49350 - Integrate ChatGPT for Custo...</div>
<div class="abs" style="left:1255px;top:586px;width:23px;height:23px;border-radius:50%;background:#0d2a6e;color:#fff;font-size:11.5px;font-weight:bold;text-align:center;line-height:23px;letter-spacing:0px">NS</div>
<div class="abs" style="left:1270px;top:603px;width:7px;height:7px;border-radius:50%;background:#3ae3cb;border:1px solid #fff"></div>
<div class="abs" style="left:1345px;top:587px;width:21px;height:21px;border-radius:50%;background:#fff;border:1px solid #e3e4ea"></div>
<svg class="abs" style="left:1350px;top:592px" width="12" height="12" viewBox="0 0 12 12"><path d="M6 0 L11.9 6 L6 12 L0.1 6 Z M6 1.6 L3.3 6 L6 10.4 L8.7 6 Z" fill="#22dcc0" fill-rule="evenodd"/></svg>
<div class="abs" style="left:1423.5px;top:592px;width:88.5px;overflow:hidden;white-space:nowrap;font-size:12.1px;line-height:1;color:#2a3050">Design risks of type</div>
<svg class="abs" style="left:1540px;top:589.7px" width="5" height="17" viewBox="0 0 5 17"><g fill="#6b7090"><circle cx="2.5" cy="1.7" r="1.6"/><circle cx="2.5" cy="7.8" r="1.6"/><circle cx="2.5" cy="13.9" r="1.6"/></g></svg>
<div class="abs" style="left:116px;top:621px;width:1450px;height:1px;background:#eeeff3"></div>
<div class="abs" style="left:136px;top:639px;width:13px;height:13.5px;border:1px solid #cfd1da;border-radius:2.5px;background:#fff"></div>
<div class="abs" style="left:183px;top:642px;width:7px;height:7px;border-radius:50%;background:#ec3b55"></div>
<div class="t" style="left:198px;top:640px;font-size:12px;color:#1e2443">Open</div>
<svg class="abs" style="left:263.5px;top:642.6px" width="9" height="6" viewBox="0 0 9 6"><path d="M0.8 0.6 L4.5 4.4 L8.2 0.6" fill="none" stroke="#9a9eb0" stroke-width="1"/></svg>
<svg class="abs" style="left:330px;top:636.6px" width="17" height="17" viewBox="0 0 17 17"><path d="M8.5 0.3 Q9.4 0.3 9.9 1.2 L16.2 13.4 Q16.9 15.6 15 15.6 H2 Q0.1 15.6 0.8 13.4 L7.1 1.2 Q7.6 0.3 8.5 0.3 Z" fill="#b8163f"/><rect x="7.6" y="4.8" width="1.8" height="5.6" rx="0.5" fill="#fff"/><rect x="7.6" y="11.6" width="1.8" height="1.8" fill="#fff"/></svg>
<div class="t" style="left:399.5px;top:640px;font-size:12px;color:#3b4159">Design</div>
<div class="t" style="left:518px;top:640px;font-size:12.2px;color:#1e2443">Risky ticket: Sensitive data handling</div>
<div class="t" style="left:878px;top:640px;font-size:12.1px;color:#1e2443">Dogfood / DOG-49378 - Fix Repo Synchronization Erro...</div>
<div class="abs" style="left:1255px;top:634px;width:23px;height:23px;border-radius:50%;background:#0d2a6e;color:#fff;font-size:11.5px;font-weight:bold;text-align:center;line-height:23px;letter-spacing:0px">NS</div>
<div class="abs" style="left:1270px;top:650px;width:7px;height:7px;border-radius:50%;background:#3ae3cb;border:1px solid #fff"></div>
<div class="abs" style="left:1345px;top:635px;width:21px;height:21px;border-radius:50%;background:#fff;border:1px solid #e3e4ea"></div>
<svg class="abs" style="left:1350px;top:639px" width="12" height="12" viewBox="0 0 12 12"><path d="M6 0 L11.9 6 L6 12 L0.1 6 Z M6 1.6 L3.3 6 L6 10.4 L8.7 6 Z" fill="#22dcc0" fill-rule="evenodd"/></svg>
<div class="abs" style="left:1423.5px;top:640px;width:88.5px;overflow:hidden;white-space:nowrap;font-size:12.1px;line-height:1;color:#2a3050">Design risks of type</div>
<svg class="abs" style="left:1540px;top:637.1px" width="5" height="17" viewBox="0 0 5 17"><g fill="#6b7090"><circle cx="2.5" cy="1.7" r="1.6"/><circle cx="2.5" cy="7.8" r="1.6"/><circle cx="2.5" cy="13.9" r="1.6"/></g></svg>
<div class="abs" style="left:116px;top:668px;width:1450px;height:1px;background:#eeeff3"></div>
<div class="abs" style="left:136px;top:686px;width:13px;height:13.5px;border:1px solid #cfd1da;border-radius:2.5px;background:#fff"></div>
<div class="abs" style="left:183px;top:689px;width:7px;height:7px;border-radius:50%;background:#ec3b55"></div>
<div class="t" style="left:198px;top:687px;font-size:12px;color:#1e2443">Open</div>
<svg class="abs" style="left:263.5px;top:690.0px" width="9" height="6" viewBox="0 0 9 6"><path d="M0.8 0.6 L4.5 4.4 L8.2 0.6" fill="none" stroke="#9a9eb0" stroke-width="1"/></svg>
<svg class="abs" style="left:330px;top:684.0px" width="17" height="17" viewBox="0 0 17 17"><path d="M8.5 0.3 Q9.4 0.3 9.9 1.2 L16.2 13.4 Q16.9 15.6 15 15.6 H2 Q0.1 15.6 0.8 13.4 L7.1 1.2 Q7.6 0.3 8.5 0.3 Z" fill="#b8163f"/><rect x="7.6" y="4.8" width="1.8" height="5.6" rx="0.5" fill="#fff"/><rect x="7.6" y="11.6" width="1.8" height="1.8" fill="#fff"/></svg>
<div class="t" style="left:399.5px;top:687px;font-size:12px;color:#3b4159">Design</div>
<div class="t" style="left:518px;top:687px;font-size:12.2px;color:#1e2443">Risky ticket: User permissions and access management</div>
<div class="t" style="left:878px;top:687px;font-size:12.1px;color:#1e2443">Lim / LIM-24659 - When permission Scope is limited to...</div>
<div class="abs" style="left:1255px;top:681px;width:23px;height:23px;border-radius:50%;background:#9b6fe0;color:#fff;font-size:11.5px;font-weight:bold;text-align:center;line-height:23px;letter-spacing:0px">UK</div>
<div class="abs" style="left:1270px;top:698px;width:7px;height:7px;border-radius:50%;background:#3ae3cb;border:1px solid #fff"></div>
<div class="abs" style="left:1345px;top:682px;width:21px;height:21px;border-radius:50%;background:#fff;border:1px solid #e3e4ea"></div>
<svg class="abs" style="left:1350px;top:686px" width="12" height="12" viewBox="0 0 12 12"><path d="M6 0 L11.9 6 L6 12 L0.1 6 Z M6 1.6 L3.3 6 L6 10.4 L8.7 6 Z" fill="#22dcc0" fill-rule="evenodd"/></svg>
<div class="abs" style="left:1423.5px;top:687px;width:88.5px;overflow:hidden;white-space:nowrap;font-size:12.1px;line-height:1;color:#2a3050">Design risks of type</div>
<svg class="abs" style="left:1540px;top:684.5px" width="5" height="17" viewBox="0 0 5 17"><g fill="#6b7090"><circle cx="2.5" cy="1.7" r="1.6"/><circle cx="2.5" cy="7.8" r="1.6"/><circle cx="2.5" cy="13.9" r="1.6"/></g></svg>
<div class="abs" style="left:116px;top:716px;width:1450px;height:1px;background:#eeeff3"></div>
<div class="abs" style="left:136px;top:733px;width:13px;height:13.5px;border:1px solid #cfd1da;border-radius:2.5px;background:#fff"></div>
<div class="abs" style="left:183px;top:736px;width:7px;height:7px;border-radius:50%;background:#ec3b55"></div>
<div class="t" style="left:198px;top:734px;font-size:12px;color:#1e2443">Open</div>
<svg class="abs" style="left:263.5px;top:737.4px" width="9" height="6" viewBox="0 0 9 6"><path d="M0.8 0.6 L4.5 4.4 L8.2 0.6" fill="none" stroke="#9a9eb0" stroke-width="1"/></svg>
<svg class="abs" style="left:330px;top:731.4px" width="17" height="17" viewBox="0 0 17 17"><path d="M8.5 0.3 Q9.4 0.3 9.9 1.2 L16.2 13.4 Q16.9 15.6 15 15.6 H2 Q0.1 15.6 0.8 13.4 L7.1 1.2 Q7.6 0.3 8.5 0.3 Z" fill="#b8163f"/><rect x="7.6" y="4.8" width="1.8" height="5.6" rx="0.5" fill="#fff"/><rect x="7.6" y="11.6" width="1.8" height="1.8" fill="#fff"/></svg>
<div class="t" style="left:399.5px;top:734px;font-size:12px;color:#3b4159">Design</div>
<div class="t" style="left:518px;top:734px;font-size:12.2px;color:#1e2443">Risky ticket: User permissions and access management</div>
<div class="t" style="left:878px;top:734px;font-size:12.1px;color:#1e2443">Dogfood / DOG-49370 - Refactor the user role manag...</div>
<div class="abs" style="left:1255px;top:728px;width:23px;height:23px;border-radius:50%;background:#0d2a6e;color:#fff;font-size:11.5px;font-weight:bold;text-align:center;line-height:23px;letter-spacing:0px">NS</div>
<div class="abs" style="left:1270px;top:745px;width:7px;height:7px;border-radius:50%;background:#3ae3cb;border:1px solid #fff"></div>
<div class="abs" style="left:1345px;top:729px;width:21px;height:21px;border-radius:50%;background:#fff;border:1px solid #e3e4ea"></div>
<svg class="abs" style="left:1350px;top:734px" width="12" height="12" viewBox="0 0 12 12"><path d="M6 0 L11.9 6 L6 12 L0.1 6 Z M6 1.6 L3.3 6 L6 10.4 L8.7 6 Z" fill="#22dcc0" fill-rule="evenodd"/></svg>
<div class="abs" style="left:1423.5px;top:734px;width:88.5px;overflow:hidden;white-space:nowrap;font-size:12.1px;line-height:1;color:#2a3050">Design risks of type</div>
<svg class="abs" style="left:1540px;top:731.9px" width="5" height="17" viewBox="0 0 5 17"><g fill="#6b7090"><circle cx="2.5" cy="1.7" r="1.6"/><circle cx="2.5" cy="7.8" r="1.6"/><circle cx="2.5" cy="13.9" r="1.6"/></g></svg>
<div class="abs" style="left:116px;top:763px;width:1450px;height:1px;background:#eeeff3"></div>
<div class="abs" style="left:136px;top:781px;width:13px;height:13.5px;border:1px solid #cfd1da;border-radius:2.5px;background:#fff"></div>
<div class="abs" style="left:183px;top:784px;width:7px;height:7px;border-radius:50%;background:#ec3b55"></div>
<div class="t" style="left:198px;top:782px;font-size:12px;color:#1e2443">Open</div>
<svg class="abs" style="left:263.5px;top:784.8px" width="9" height="6" viewBox="0 0 9 6"><path d="M0.8 0.6 L4.5 4.4 L8.2 0.6" fill="none" stroke="#9a9eb0" stroke-width="1"/></svg>
<svg class="abs" style="left:330px;top:778.8px" width="17" height="17" viewBox="0 0 17 17"><path d="M8.5 0.3 Q9.4 0.3 9.9 1.2 L16.2 13.4 Q16.9 15.6 15 15.6 H2 Q0.1 15.6 0.8 13.4 L7.1 1.2 Q7.6 0.3 8.5 0.3 Z" fill="#b8163f"/><rect x="7.6" y="4.8" width="1.8" height="5.6" rx="0.5" fill="#fff"/><rect x="7.6" y="11.6" width="1.8" height="1.8" fill="#fff"/></svg>
<div class="t" style="left:399.5px;top:782px;font-size:12px;color:#3b4159">Design</div>
<div class="t" style="left:518px;top:782px;font-size:12.2px;color:#1e2443">Risky ticket: Architecture design</div>
<div class="t" style="left:878px;top:782px;font-size:12.1px;color:#1e2443">Dogfood / DOG-49347 - Implement new microservices ...</div>
<div class="abs" style="left:1255px;top:776px;width:23px;height:23px;border-radius:50%;background:#0d2a6e;color:#fff;font-size:11.5px;font-weight:bold;text-align:center;line-height:23px;letter-spacing:0px">NS</div>
<div class="abs" style="left:1270px;top:792px;width:7px;height:7px;border-radius:50%;background:#3ae3cb;border:1px solid #fff"></div>
<div class="abs" style="left:1345px;top:777px;width:21px;height:21px;border-radius:50%;background:#fff;border:1px solid #e3e4ea"></div>
<svg class="abs" style="left:1350px;top:781px" width="12" height="12" viewBox="0 0 12 12"><path d="M6 0 L11.9 6 L6 12 L0.1 6 Z M6 1.6 L3.3 6 L6 10.4 L8.7 6 Z" fill="#22dcc0" fill-rule="evenodd"/></svg>
<div class="abs" style="left:1423.5px;top:782px;width:88.5px;overflow:hidden;white-space:nowrap;font-size:12.1px;line-height:1;color:#2a3050">Design risks of type</div>
<svg class="abs" style="left:1540px;top:779.3px" width="5" height="17" viewBox="0 0 5 17"><g fill="#6b7090"><circle cx="2.5" cy="1.7" r="1.6"/><circle cx="2.5" cy="7.8" r="1.6"/><circle cx="2.5" cy="13.9" r="1.6"/></g></svg>
<div class="abs" style="left:180px;top:760px;width:1200px;height:42px;background:linear-gradient(to bottom,rgba(0,0,0,0),rgba(0,0,0,0.025) 40%,rgba(0,0,0,0.07) 75%,rgba(0,0,0,0.115));-webkit-mask-image:linear-gradient(to right,transparent,#000 150px,#000 1050px,transparent)"></div>
</div>
</body></html>
